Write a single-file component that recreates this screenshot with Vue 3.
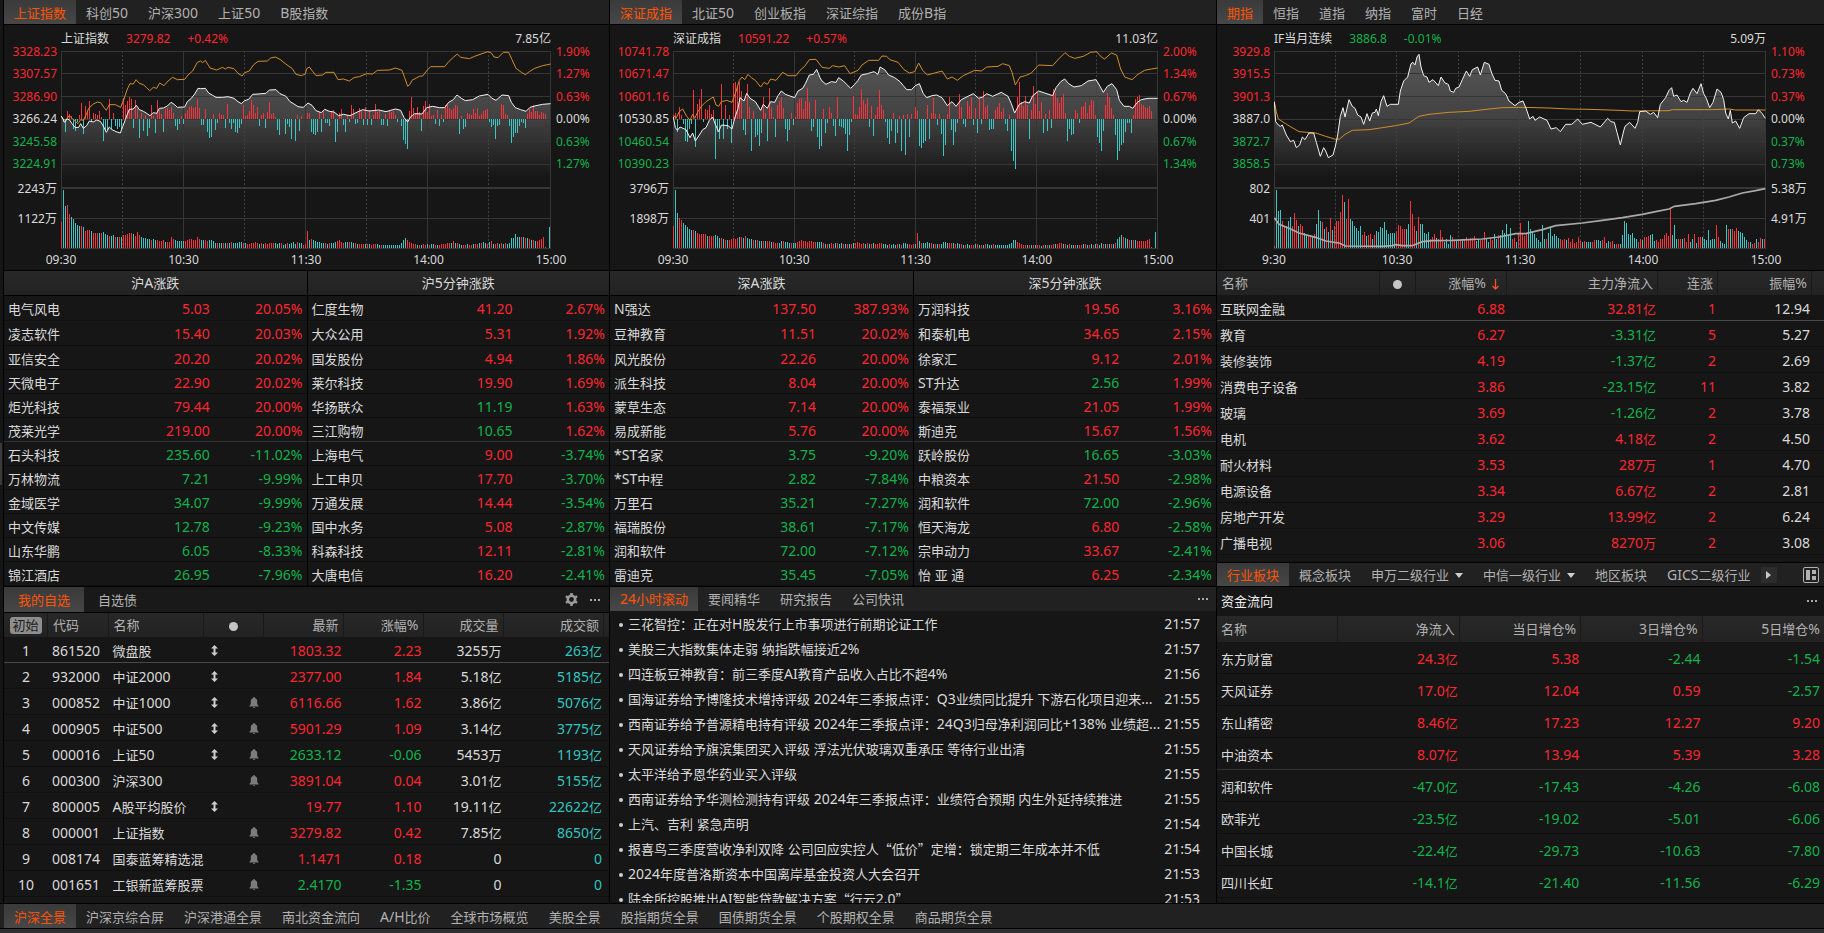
<script setup>
import { h } from 'vue'

/* Latin and digit runs use a slightly larger face than the Chinese text. */
const Txt = (props) =>
  String(props.t)
    .split(/([\x20-\x7e]+)/)
    .filter(Boolean)
    .map((run) => (/^[\x20-\x7e]/.test(run) ? h('span', { class: 'lat' }, run) : run))
Txt.props = ['t']

const bars = (list, base) =>
  [1, -1].map((sign) =>
    list
      .map((v, i) => [v, i])
      .filter(([v]) => v * sign > 0)
      .map(([v, i]) => `M${17 + i * 6} ${base}v${base > 300 ? -Math.abs(v) * 3 : -v * 3}`)
      .join('')
  )

const area = (pts, right) => `M${pts.replace(/ /g, 'L')}L${right} 429L16 429Z`

const charts = [
  {
    id: 'sh',
    tabs: ['上证指数', '科创50', '沪深300', '上证50', 'B股指数'],
    name: '上证指数', price: '3279.82', pct: '+0.42%', tone: 'up', amount: '7.85亿',
    left: ['3328.23', '3307.57', '3286.90', '3266.24', '3245.58', '3224.91'],
    right: ['1.90%', '1.27%', '0.63%', '0.00%', '0.63%', '1.27%'],
    volLeft: ['2243万', '1122万'], volRight: [],
    times: ['09:30', '10:30', '11:30', '14:00', '15:00'],
    width: 1470,
    solid: [16, 382, 748, 1114, 1483], dashed: [199, 565, 931, 1297],
    line: '16,213 26,232 33,222 40,224 48,236 58,248 68,247 74,236 82,250 92,242 100,228 112,231 122,225 133,229 142,243 151,262 160,246 168,254 180,260 193,264 200,245 208,224 214,208 220,193 232,192 241,181 250,194 262,199 272,205 282,212 292,203 302,205 310,190 322,189 334,183 345,172 356,179 364,187 386,186 394,170 406,160 416,147 426,130 434,131 448,130 458,144 470,151 480,157 500,157 516,155 534,160 546,170 556,176 566,167 578,163 590,148 606,147 630,145 640,135 660,134 672,146 690,154 702,170 714,177 726,185 742,187 756,174 768,181 780,197 796,203 806,193 820,199 834,201 848,212 862,208 882,212 900,203 920,194 940,198 968,195 990,200 1018,192 1034,196 1044,218 1055,231 1064,215 1076,206 1098,207 1112,188 1130,184 1150,188 1166,188 1178,172 1192,164 1203,150 1216,160 1228,167 1250,164 1270,153 1296,148 1308,160 1320,166 1338,150 1358,152 1366,172 1378,188 1394,194 1410,199 1422,187 1440,182 1460,178 1484,176',
    avg: '16,218 28,226 40,212 52,224 66,236 74,224 82,226 92,206 98,190 112,177 124,171 134,173 143,186 151,196 160,179 178,179 194,187 204,162 214,132 222,116 232,117 240,104 250,115 262,119 272,128 281,137 292,127 302,130 311,114 324,122 336,108 350,97 364,104 386,103 396,90 410,78 424,52 434,48 440,53 448,46 462,69 482,75 500,67 508,72 516,67 534,71 546,85 558,93 566,83 580,78 592,60 606,49 634,48 644,39 658,36 672,43 684,53 696,62 708,70 720,88 736,92 748,87 752,71 760,66 770,79 780,92 800,90 810,82 834,82 846,104 862,102 880,108 894,98 910,95 932,86 950,87 964,76 1000,75 1018,69 1038,76 1046,98 1055,124 1062,118 1068,106 1090,94 1100,93 1114,75 1124,65 1166,65 1178,50 1192,37 1204,27 1214,37 1240,41 1256,34 1278,26 1296,20 1306,24 1314,36 1326,38 1342,22 1358,22 1368,44 1380,70 1396,82 1408,89 1420,80 1436,70 1460,62 1484,57',
    net: [0, -3, -13, 8, 5, 3, -10, -12, -3, 4, 16, -15, 13, 8, 18, -3, 6, 5, 4, 8, 2, -22, -12, -11, 20, -10, 6, -7, -10, -8, -10, 21, 14, 18, 22, 20, -9, 19, 10, -19, 6, -12, 4, -17, -9, 14, 3, -14, 19, 9, 5, -13, 10, 11, 9, 12, 6, -7, -11, -5, 3, -5, 6, 9, 12, 13, 11, 12, 20, 11, -6, -6, 10, -13, -19, -18, 5, -11, -4, 6, 4, 4, -9, 15, -4, -10, -4, -13, -14, -9, -5, 14, 3, 4, 8, 19, 14, 6, 12, -7, 4, 6, -9, 7, 17, 5, 6, 2, -11, -16, 0, 1, -15, -5, -8, -20, 0, -22, 4, -12, 3, 0, 0, 6, 6, -13, -15, -16, -13, 7, -13, 9, -4, -4, -7, 8, 9, -23, -13, 6, 10, -6, -13, 4, -3, 14, 10, -5, -4, 11, 9, -6, 12, -6, 9, -6, 4, 15, 7, 9, -6, -6, 5, -7, 9, 7, 8, 4, -3, 0, -7, -21, -25, -30, 8, 22, 11, 5, 12, 7, -12, 13, 18, 7, 15, 3, 4, -5, 9, -7, 4, -3, 14, 15, 11, 9, 11, 14, 13, -15, 3, -10, -8, 6, 5, 4, 10, 6, 11, 3, 5, 8, 9, 10, -3, -8, -6, -20, -7, -6, 15, 14, 5, 4, -7, -24, -18, -14, -14, -7, -3, -4, -9, 5, 10, 7, 14, 8, 8, 4, 7, 6, 5],
    vol: [26, -58, -42, 43, 34, -31, -29, -25, -23, -22, 22, -21, 17, 18, 18, -17, 15, 15, 15, -15, 15, -16, -14, -13, 12, -12, -13, 11, -11, 11, -11, 13, 13, 14, 15, 15, -14, 12, 16, 13, -11, -10, -10, -9, -9, 8, -9, -8, 8, 7, 7, 8, -6, 6, 6, 11, 9, -8, -7, -7, -7, -7, 7, 8, 9, 9, 8, 8, 11, 9, -8, -8, 8, 7, -8, -8, -7, -5, 5, -5, -5, 5, -5, 5, -5, 6, -5, -5, -5, -6, -6, 5, -5, 4, 4, 5, 5, 6, 5, -4, 5, -4, 5, 4, 5, 5, 5, -5, -4, -5, 5, -3, -4, 5, -4, -5, -6, -4, 6, -5, -5, 3, 4, 17, -8, 9, -8, -7, -6, -6, -5, -5, 5, -4, 5, -5, -5, -6, 7, 8, 6, 5, -6, -6, 6, -6, -5, 5, -4, 4, 4, 4, -4, 4, -4, 3, 4, 4, -4, -3, 3, -3, -3, -3, -3, -3, -3, -3, -3, -3, -5, -8, -10, 8, 6, 5, 4, 4, -3, 3, -3, 4, 3, -4, 3, -4, -4, 3, -3, 3, 4, 4, 4, 5, 5, -5, 7, -5, 5, -4, -3, 3, 3, -4, 3, 3, -4, 4, 4, -5, 5, -6, -5, 4, -6, 7, -4, 4, 5, -4, 5, -4, 5, -4, -5, -10, -10, -14, -11, -11, 11, -11, 10, -10, 9, -8, 8, -7, 7, 8, 9, 11, 1, 0, -21]
  },
  {
    id: 'sz',
    tabs: ['深证成指', '北证50', '创业板指', '深证综指', '成份B指'],
    name: '深证成指', price: '10591.22', pct: '+0.57%', tone: 'up', amount: '11.03亿',
    left: ['10741.78', '10671.47', '10601.16', '10530.85', '10460.54', '10390.23'],
    right: ['2.00%', '1.34%', '0.67%', '0.00%', '0.67%', '1.34%'],
    volLeft: ['3796万', '1898万'], volRight: [],
    times: ['09:30', '10:30', '11:30', '14:00', '15:00'],
    width: 1455,
    solid: [16, 379, 742, 1105, 1468], dashed: [196, 559, 922, 1285],
    line: '16,216 22,248 28,256 36,246 54,254 66,278 74,264 82,288 94,270 104,254 114,248 124,226 134,216 142,238 152,260 160,240 180,242 192,252 200,220 210,190 216,158 228,168 236,145 246,160 262,170 278,196 286,178 298,190 308,170 320,172 330,152 340,138 352,148 380,158 390,138 404,130 412,116 424,90 436,88 446,73 456,98 462,108 474,118 490,110 504,112 512,98 526,108 536,118 548,130 560,118 570,106 580,90 598,86 618,80 630,88 636,66 650,74 662,90 680,98 696,110 706,122 716,134 730,134 742,122 754,116 766,146 776,158 792,152 806,150 822,158 838,182 852,170 864,184 880,164 900,154 916,146 932,160 944,156 956,146 974,154 1000,142 1020,154 1030,176 1040,204 1054,178 1070,170 1084,174 1094,152 1112,138 1130,144 1154,152 1164,128 1178,110 1190,102 1202,116 1218,126 1240,122 1260,108 1284,104 1296,124 1306,142 1318,124 1332,116 1346,134 1354,166 1368,184 1384,184 1394,190 1408,172 1420,164 1440,160 1469,160',
    avg: '16,210 24,220 34,200 44,192 56,214 66,226 74,208 80,220 90,200 100,184 114,170 136,156 144,180 152,184 160,170 176,166 192,172 204,140 214,106 222,96 230,104 240,88 250,98 262,106 278,126 288,112 298,118 308,102 324,106 344,82 360,92 384,92 396,76 410,64 424,44 444,43 462,67 484,70 494,62 512,66 530,62 546,86 570,76 582,60 602,46 632,46 642,33 656,34 666,44 690,52 708,74 724,84 740,80 752,54 764,76 778,90 800,84 822,78 838,102 852,96 868,106 886,92 920,76 940,78 956,66 990,64 1004,56 1024,62 1032,82 1042,120 1056,96 1072,92 1090,84 1112,60 1154,62 1172,42 1191,23 1204,34 1220,40 1246,34 1268,22 1286,20 1300,36 1310,42 1330,24 1346,30 1358,72 1370,96 1392,104 1410,88 1430,76 1450,72 1469,69',
    net: [3, 6, -13, 12, 4, -5, -22, -23, -10, -5, 29, -28, 15, 20, 30, -3, 10, 9, 14, 5, 9, -40, -13, -20, 35, -20, 14, -10, 4, -24, 36, 37, 33, 37, 28, -11, -16, 35, 12, -32, 8, -18, -16, -27, -14, 22, 6, -22, 31, 12, 2, -18, 14, 18, 22, 11, -10, -22, -11, 6, -6, 2, 16, 20, 21, 10, 18, 31, 17, -12, -8, 19, -18, -30, -27, 10, -14, -4, 12, 6, -7, -17, 22, -7, -8, -9, -15, -32, -16, -3, 23, 5, 4, 12, 30, 19, 15, 21, -8, 13, -17, 4, 12, 29, 14, 9, -3, -19, -25, -12, 6, -24, -14, 3, -32, 4, -36, 5, -18, 5, 0, 12, 8, -27, -29, -24, -22, 14, -20, 6, 21, 5, -6, 5, -15, -37, -26, 5, 22, -11, -26, -13, -4, 25, 12, -5, -8, 18, 13, 22, -6, 11, -14, 20, -5, 28, 12, 14, -11, -10, -10, 9, 12, 16, 7, 11, -5, -12, 4, -32, -42, -50, 22, 37, 17, 13, 23, 14, -20, 9, 33, 15, 27, 8, 17, -14, 5, -12, 9, -9, 30, 26, 21, 16, 22, 25, 6, -22, -10, -16, -15, 9, 6, -4, 12, 13, 17, 6, 14, 19, 18, 4, -18, -24, -32, -12, 14, 26, 22, 11, 4, -16, -41, -32, -26, -24, -13, -4, -4, -14, 4, 20, 22, 24, 15, 14, 12, 11, 13, 8],
    vol: [22, -58, -35, 30, 28, -25, -23, -21, -19, -18, 18, -17, 15, 14, 14, 14, 14, -12, 12, 12, 12, -13, -12, -10, 10, -9, 8, -8, 8, 9, 10, 9, 10, -11, 11, -10, 12, -10, -9, -9, 8, -8, 8, -7, -7, 7, -7, 7, 7, -6, 6, 5, 5, -5, -7, 7, -6, -6, -5, 5, -5, -5, 6, 7, 8, 7, 7, 6, 7, 7, 6, 6, -6, -6, -6, 5, -4, 4, -4, 5, 4, -5, 5, -4, -5, 4, -4, 4, -4, 4, -5, 5, 6, 5, 4, 5, -4, 5, -4, 4, -5, 4, 4, 5, 5, -4, -4, -3, 4, -3, -4, -3, 4, -4, 3, -5, -5, -4, 4, 3, 4, -4, 15, -7, 5, -5, -5, -6, -5, 5, -4, 4, -4, 4, -4, -6, -6, -5, 5, 5, -5, 4, -5, -4, 4, -3, 3, -4, -3, 3, 3, -4, 4, -3, 3, -3, 4, -4, -3, -3, 4, -3, -3, -3, -3, -3, -3, -3, -4, -5, -8, -8, 6, 5, 4, 3, 3, -3, 3, -3, 3, -3, 3, 3, -2, 3, -3, 3, -3, 3, 4, -4, 4, 5, 5, -4, 4, -3, 4, -3, -3, 3, -3, 3, 3, -4, 4, -3, 3, -4, 3, -4, 4, -3, -5, 4, -4, 4, -4, 4, -4, 5, -9, -11, -13, 11, -10, -9, 8, -8, 8, -8, 7, 7, 7, 7, 7, 8, 9, 1, 0, -16]
  },
  {
    id: 'if',
    tabs: ['期指', '恒指', '道指', '纳指', '富时', '日经'],
    name: 'IF当月连续', price: '3886.8', pct: '-0.01%', tone: 'down', amount: '5.09万',
    left: ['3929.8', '3915.5', '3901.3', '3887.0', '3872.7', '3858.5'],
    right: ['1.10%', '0.73%', '0.37%', '0.00%', '0.37%', '0.73%'],
    volLeft: ['802', '401'], volRight: ['5.38万', '4.91万'],
    times: ['9:30', '10:30', '11:30', '14:00', '15:00'],
    width: 1476,
    solid: [16, 1489], dashed: [199, 382, 568, 751, 934, 1120, 1303],
    line: '16,170 20,230 28,240 34,244 40,240 52,270 64,290 74,286 82,308 92,300 100,276 108,284 120,264 134,264 142,292 154,334 164,308 170,318 178,338 192,330 200,300 206,270 214,214 222,188 228,216 240,164 250,184 258,190 266,210 276,216 284,238 294,206 302,228 310,204 318,202 322,192 328,212 336,170 344,152 354,184 364,178 388,178 394,138 404,108 416,96 426,56 432,52 438,60 444,36 450,28 456,66 464,92 474,96 480,112 492,104 508,122 516,96 528,114 538,118 544,138 554,142 560,130 570,126 580,104 592,78 602,94 610,74 626,66 634,90 646,52 660,58 668,84 678,106 690,108 698,136 710,146 720,168 738,182 750,172 762,168 772,192 782,222 792,214 798,226 812,216 834,226 846,252 862,248 874,260 890,238 908,238 926,222 940,238 966,232 994,246 1016,220 1026,230 1036,232 1044,262 1054,300 1064,258 1068,244 1082,232 1098,250 1106,232 1112,200 1130,198 1144,208 1154,202 1166,218 1174,178 1190,158 1200,136 1208,128 1214,154 1224,150 1236,170 1244,166 1254,172 1264,144 1272,130 1284,146 1296,116 1304,146 1312,160 1322,188 1332,172 1344,132 1356,142 1364,164 1370,204 1378,222 1384,196 1390,234 1400,228 1412,250 1424,218 1440,206 1460,206 1468,194 1480,206 1489,220',
    avg: '16,170 22,200 28,222 50,236 66,246 90,260 140,264 170,274 200,283 212,282 228,268 250,256 300,254 340,248 380,242 420,234 450,214 480,208 540,202 600,199 660,192 700,188 760,187 840,189 900,192 960,193 1050,196 1090,198 1200,197 1210,194 1330,194 1380,192 1400,195 1489,195',
    interest: '16,518 30,538 60,550 90,564 140,577 170,588 210,594 230,603 340,604 370,602 380,599 400,602 430,602 460,590 490,587 550,586 640,582 690,576 740,566 770,566 820,554 860,542 940,534 1000,526 1060,518 1120,508 1160,500 1200,492 1216,484 1280,476 1340,466 1380,456 1420,444 1460,437 1489,431',
    net: [],
    vol: [2, -58, -37, -38, 27, 22, -22, -27, -31, 22, 35, 28, -22, 24, 22, -15, -13, 13, 12, -12, 14, -24, -38, -27, 26, -19, 21, -16, 30, -18, 22, 27, 27, 36, 53, -46, 29, 49, -29, -27, -22, -20, -17, -22, 13, 16, -12, 13, 14, -9, 13, -17, -16, -21, -20, -26, -18, -14, -15, -15, -15, 17, 23, 22, 19, 19, -19, -24, 47, 34, 22, -17, 31, -24, -24, -15, -14, -16, 9, 11, 14, -10, 9, 18, 11, -6, -9, -4, -13, 11, 7, -8, 8, 8, -9, 8, 11, 9, 10, 10, 12, -7, -9, 8, 8, 16, -9, -6, 10, 8, -14, -9, 13, -13, -18, -15, -24, -13, -20, 9, 10, -6, 15, 25, 14, 12, 14, -27, -19, -16, -14, -10, -8, -6, -23, -9, 9, -15, -21, -12, -14, -12, -10, 9, 8, 9, -8, 10, 6, 9, 5, 6, 11, 7, -6, 7, -6, -6, -6, 6, 8, -8, -8, -7, 8, 11, -5, -7, 6, 7, -4, 4, 4, -4, -13, -27, -25, -14, -13, -15, -10, -9, 6, 9, -8, 11, 11, 12, -13, -14, -7, 8, 6, 9, 9, 13, 15, 12, 39, -13, -23, -9, 9, 9, -9, 10, 6, 14, -6, -9, 14, -5, 11, 11, -11, -9, -8, -18, -8, -9, -9, 23, 11, -7, -5, -4, -23, 19, -19, 19, 17, 20, -17, -16, -15, -11, -8, 6, -6, 4, 5, -9, 6, 10, -9, 9, -12, 14, -15]
  }
].map((c) => ({ ...c, netBars: bars(c.net, 222), volBars: bars(c.vol, 609), fill: area(c.line, 15 + c.width - 2) }))

const rowLines = [19, 85, 154, 222, 290, 358, 520, 609]
const axisTone = (i) => (i < 3 ? 'up' : i > 3 ? 'down' : 'flat')
const tone = (v) => (String(v).startsWith('-') ? 'down' : 'up')

const rankGroups = [
  [
    { title: '沪A涨跌', rows: [['电气风电', '5.03', '20.05%'], ['凌志软件', '15.40', '20.03%'], ['亚信安全', '20.20', '20.02%'], ['天微电子', '22.90', '20.02%'], ['炬光科技', '79.44', '20.00%'], ['茂莱光学', '219.00', '20.00%'], ['石头科技', '235.60', '-11.02%', 'down'], ['万林物流', '7.21', '-9.99%', 'down'], ['金域医学', '34.07', '-9.99%', 'down'], ['中文传媒', '12.78', '-9.23%', 'down'], ['山东华鹏', '6.05', '-8.33%', 'down'], ['锦江酒店', '26.95', '-7.96%', 'down']] },
    { title: '沪5分钟涨跌', rows: [['仁度生物', '41.20', '2.67%'], ['大众公用', '5.31', '1.92%'], ['国发股份', '4.94', '1.86%'], ['莱尔科技', '19.90', '1.69%'], ['华扬联众', '11.19', '1.63%', 'down'], ['三江购物', '10.65', '1.62%', 'down'], ['上海电气', '9.00', '-3.74%'], ['上工申贝', '17.70', '-3.70%'], ['万通发展', '14.44', '-3.54%'], ['国中水务', '5.08', '-2.87%'], ['科森科技', '12.11', '-2.81%'], ['大唐电信', '16.20', '-2.41%']] }
  ],
  [
    { title: '深A涨跌', rows: [['N强达', '137.50', '387.93%'], ['豆神教育', '11.51', '20.02%'], ['风光股份', '22.26', '20.00%'], ['派生科技', '8.04', '20.00%'], ['蒙草生态', '7.14', '20.00%'], ['易成新能', '5.76', '20.00%'], ['*ST名家', '3.75', '-9.20%', 'down'], ['*ST中程', '2.82', '-7.84%', 'down'], ['万里石', '35.21', '-7.27%', 'down'], ['福瑞股份', '38.61', '-7.17%', 'down'], ['润和软件', '72.00', '-7.12%', 'down'], ['雷迪克', '35.45', '-7.05%', 'down']] },
    { title: '深5分钟涨跌', rows: [['万润科技', '19.56', '3.16%'], ['和泰机电', '34.65', '2.15%'], ['徐家汇', '9.12', '2.01%'], ['ST升达', '2.56', '1.99%', 'down'], ['泰福泵业', '21.05', '1.99%'], ['斯迪克', '15.67', '1.56%'], ['跃岭股份', '16.65', '-3.03%', 'down'], ['中粮资本', '21.50', '-2.98%'], ['润和软件', '72.00', '-2.96%', 'down'], ['恒天海龙', '6.80', '-2.58%'], ['宗申动力', '33.67', '-2.41%'], ['怡 亚 通', '6.25', '-2.34%']] }
  ]
]

const watch = [
  ['861520', '微盘股', 1, 0, '1803.32', '2.23', '3255万', '263亿'],
  ['932000', '中证2000', 1, 0, '2377.00', '1.84', '5.18亿', '5185亿'],
  ['000852', '中证1000', 1, 1, '6116.66', '1.62', '3.86亿', '5076亿'],
  ['000905', '中证500', 1, 1, '5901.29', '1.09', '3.14亿', '3775亿'],
  ['000016', '上证50', 1, 1, '2633.12', '-0.06', '5453万', '1193亿'],
  ['000300', '沪深300', 0, 1, '3891.04', '0.04', '3.01亿', '5155亿'],
  ['800005', 'A股平均股价', 1, 0, '19.77', '1.10', '19.11亿', '22622亿'],
  ['000001', '上证指数', 0, 1, '3279.82', '0.42', '7.85亿', '8650亿'],
  ['008174', '国泰蓝筹精选混', 0, 1, '1.1471', '0.18', '0', '0'],
  ['001651', '工银新蓝筹股票', 0, 1, '2.4170', '-1.35', '0', '0']
]

const newsTabs = ['24小时滚动', '要闻精华', '研究报告', '公司快讯']
const news = [
  ['三花智控：正在对H股发行上市事项进行前期论证工作', '21:57'],
  ['美股三大指数集体走弱 纳指跌幅接近2%', '21:57'],
  ['四连板豆神教育：前三季度AI教育产品收入占比不超4%', '21:56'],
  ['国海证券给予博隆技术增持评级 2024年三季报点评：Q3业绩同比提升 下游石化项目迎来...', '21:55'],
  ['西南证券给予普源精电持有评级 2024年三季报点评：24Q3归母净利润同比+138% 业绩超...', '21:55'],
  ['天风证券给予旗滨集团买入评级 浮法光伏玻璃双重承压 等待行业出清', '21:55'],
  ['太平洋给予恩华药业买入评级', '21:55'],
  ['西南证券给予华测检测持有评级 2024年三季报点评：业绩符合预期 内生外延持续推进', '21:55'],
  ['上汽、吉利 紧急声明', '21:54'],
  ['报喜鸟三季度营收净利双降 公司回应实控人“低价”定增：锁定期三年成本并不低', '21:54'],
  ['2024年度普洛斯资本中国离岸基金投资人大会召开', '21:53'],
  ['陆金所控股推出AI智能贷款解决方案“行云2.0”', '21:53']
]

const sectors = [
  ['互联网金融', '6.88', '32.81亿', '1', '12.94'],
  ['教育', '6.27', '-3.31亿', '5', '5.27'],
  ['装修装饰', '4.19', '-1.37亿', '2', '2.69'],
  ['消费电子设备', '3.86', '-23.15亿', '11', '3.82'],
  ['玻璃', '3.69', '-1.26亿', '2', '3.78'],
  ['电机', '3.62', '4.18亿', '2', '4.50'],
  ['耐火材料', '3.53', '287万', '1', '4.70'],
  ['电源设备', '3.34', '6.67亿', '2', '2.81'],
  ['房地产开发', '3.29', '13.99亿', '2', '6.24'],
  ['广播电视', '3.06', '8270万', '2', '3.08']
]
const sectorTabs = [['行业板块'], ['概念板块'], ['申万二级行业', 1], ['中信一级行业', 1], ['地区板块'], ['GICS二级行业']]

const flows = [
  ['东方财富', '24.3亿', '5.38', '-2.44', '-1.54'],
  ['天风证券', '17.0亿', '12.04', '0.59', '-2.57'],
  ['东山精密', '8.46亿', '17.23', '12.27', '9.20'],
  ['中油资本', '8.07亿', '13.94', '5.39', '3.28'],
  ['润和软件', '-47.0亿', '-17.43', '-4.26', '-6.08'],
  ['欧菲光', '-23.5亿', '-19.02', '-5.01', '-6.06'],
  ['中国长城', '-22.4亿', '-29.73', '-10.63', '-7.80'],
  ['四川长虹', '-14.1亿', '-21.40', '-11.56', '-6.29']
]

const pages = ['沪深全景', '沪深京综合屏', '沪深港通全景', '南北资金流向', 'A/H比价', '全球市场概览', '美股全景', '股指期货全景', '国债期货全景', '个股期权全景', '商品期货全景']
</script>

<template>
  <div class="app">
    <main class="board">
      <div class="gutter"><i class="handle"></i></div>

      <section v-for="(c, ci) in charts" :key="c.id" class="col">
        <div class="quote">
          <nav class="tabs">
            <button v-for="(t, i) in c.tabs" :key="t" type="button" :class="{ on: i === 0 }"><Txt :t="t" /></button>
          </nav>
          <div class="chart" :class="c.id">
            <div class="chart-title">
              <span><Txt :t="c.name" /></span>
              <span :class="c.tone"><Txt :t="c.price" /></span>
              <span :class="c.tone"><Txt :t="c.pct" /></span>
              <span class="amount"><Txt :t="c.amount" /></span>
            </div>
            <div class="axis axis-left">
              <div class="prices"><span v-for="(p, i) in c.left" :key="i" :class="axisTone(i)"><Txt :t="p" /></span></div>
              <div class="vols"><span v-for="p in c.volLeft" :key="p"><Txt :t="p" /></span></div>
            </div>
            <svg class="plot" :viewBox="`15 18 ${c.width} 594`" preserveAspectRatio="none" role="img" :aria-label="c.name">
              <defs>
                <linearGradient :id="'g-' + c.id" gradientUnits="userSpaceOnUse" x1="0" y1="30" x2="0" y2="400">
                  <stop offset="0" stop-color="#fff" stop-opacity="0.28" />
                  <stop offset="0.5" stop-color="#fff" stop-opacity="0.19" />
                  <stop offset="1" stop-color="#fff" stop-opacity="0" />
                </linearGradient>
              </defs>
              <path :d="c.fill" :fill="`url(#g-${c.id})`" />
              <g class="grid">
                <path v-for="y in rowLines" :key="y" :d="`M15 ${y}H${15 + c.width}`" />
                <path class="thick" :d="`M15 429H${15 + c.width}`" />
                <path v-for="x in c.solid" :key="x" :d="`M${x} 18V612`" />
                <path v-for="x in c.dashed" :key="x" class="dash" :d="`M${x} 18V612`" />
              </g>
              <path class="bar red" :d="c.netBars[0]" />
              <path class="bar cyan" :d="c.netBars[1]" />
              <path class="bar red" :d="c.volBars[0]" />
              <path class="bar cyan" :d="c.volBars[1]" />
              <polyline class="line gold" :points="c.avg" />
              <polyline class="line white" :points="c.line" />
              <polyline v-if="c.interest" class="line interest" :points="c.interest" />
            </svg>
            <div class="axis axis-right">
              <div class="prices"><span v-for="(p, i) in c.right" :key="i" :class="axisTone(i)"><Txt :t="p" /></span></div>
              <div class="vols"><span v-for="p in c.volRight" :key="p"><Txt :t="p" /></span></div>
            </div>
            <div class="times"><span v-for="t in c.times" :key="t"><Txt :t="t" /></span></div>
          </div>
        </div>

        <div v-if="ci < 2" class="ranks">
          <table v-for="g in rankGroups[ci]" :key="g.title" class="rank">
            <colgroup><col class="w34" /><col class="w34" /><col /></colgroup>
            <thead><tr><th colspan="3"><Txt :t="g.title" /></th></tr></thead>
            <tbody>
              <tr v-for="r in g.rows" :key="r[0]">
                <td><Txt :t="r[0]" /></td>
                <td class="num" :class="r[3] || 'up'"><Txt :t="r[1]" /></td>
                <td class="num last" :class="tone(r[2])"><Txt :t="r[2]" /></td>
              </tr>
            </tbody>
          </table>
        </div>

        <template v-if="ci === 0">
          <div class="tabbar watch-tabs">
            <nav class="tabs">
              <button type="button" class="on">我的自选</button>
              <button type="button">自选债</button>
            </nav>
            <button type="button" class="icon-btn" aria-label="设置">
              <svg width="13" height="13" viewBox="0 0 13 13" fill="none" stroke="#9c9c9c">
                <circle cx="6.5" cy="6.5" r="3.7" stroke-width="2.6" />
                <path stroke-width="2.6" d="M6.5 0v2M6.5 11v2M.9 3.250l1.700 1M10.400 8.750l1.700 1M12.100 3.250l-1.700 1M2.600 8.750l-1.700 1" />
              </svg>
            </button>
            <button type="button" class="icon-btn dots" aria-label="更多"><i></i><i></i><i></i></button>
          </div>
          <table class="data watch">
            <colgroup><col v-for="n in 9" :key="n" :class="'c' + n" /></colgroup>
            <thead>
              <tr>
                <th class="mid"><button type="button" class="reset">初始</button></th>
                <th>代码</th><th>名称</th><th class="mid"><i class="dot"></i></th>
                <th class="num">最新</th><th class="num"><Txt t="涨幅%" /></th><th class="num">成交量</th><th class="num">成交额</th><th></th>
              </tr>
            </thead>
            <tbody>
              <tr v-for="(r, i) in watch" :key="r[0]">
                <td class="mid"><Txt :t="i + 1" /></td>
                <td><Txt :t="r[0]" /></td>
                <td class="name"><Txt :t="r[1]" /></td>
                <td>
                  <div class="marks">
                    <svg v-if="r[2]" class="updown" width="7" height="11" viewBox="0 0 7 11"><path fill="#cdcdcd" d="M3.500 0L7 3.500H4.500v4H7L3.500 11 0 7.500h2.500v-4H0z" /></svg>
                    <svg v-if="r[3]" class="bell" width="10" height="11" viewBox="0 0 10 11"><path fill="#7c7c7c" d="M5 0c.6 0 .9.400.9.900C7.400 1.300 8.200 2.500 8.200 4v3L9.600 9v.5H.4V9l1.400-2V4c0-1.500.8-2.700 2.300-3.100C4.100.4 4.400 0 5 0zM3.800 10h2.400c-.2.700-.6 1-1.200 1s-1-.3-1.200-1z" /></svg>
                  </div>
                </td>
                <td class="num" :class="tone(r[5])"><Txt :t="r[4]" /></td>
                <td class="num" :class="tone(r[5])"><Txt :t="r[5]" /></td>
                <td class="num"><Txt :t="r[6]" /></td>
                <td class="num teal"><Txt :t="r[7]" /></td>
                <td></td>
              </tr>
            </tbody>
          </table>
        </template>

        <template v-else-if="ci === 1">
          <div class="tabbar">
            <nav class="tabs">
              <button v-for="(t, i) in newsTabs" :key="t" type="button" :class="{ on: i === 0 }"><Txt :t="t" /></button>
            </nav>
            <button type="button" class="icon-btn dots news-more" aria-label="更多"><i></i><i></i><i></i></button>
          </div>
          <ul class="news">
            <li v-for="n in news" :key="n[0]">
              <a href="#"><Txt :t="n[0]" /></a>
              <time><Txt :t="n[1]" /></time>
            </li>
          </ul>
        </template>

        <template v-else>
          <table class="data sector">
            <colgroup><col v-for="n in 7" :key="n" :class="'c' + n" /></colgroup>
            <thead>
              <tr>
                <th>名称</th><th class="mid"><i class="dot"></i></th>
                <th class="num sorted"><Txt t="涨幅%" /><svg width="7" height="11" viewBox="0 0 7 11"><path d="M3.500 0v10M.5 7l3 3 3-3" fill="none" stroke="#f4502c" stroke-width="1.300" /></svg></th>
                <th class="num">主力净流入</th><th class="num">连涨</th><th class="num"><Txt t="振幅%" /></th><th></th>
              </tr>
            </thead>
            <tbody>
              <tr v-for="r in sectors" :key="r[0]">
                <td><Txt :t="r[0]" /></td><td></td>
                <td class="num up"><Txt :t="r[1]" /></td>
                <td class="num" :class="tone(r[2])"><Txt :t="r[2]" /></td>
                <td class="num up"><Txt :t="r[3]" /></td>
                <td class="num"><Txt :t="r[4]" /></td><td></td>
              </tr>
            </tbody>
          </table>
          <div class="tabbar sector-tabs">
            <nav class="tabs">
              <button v-for="(t, i) in sectorTabs" :key="t[0]" type="button" :class="{ on: i === 0 }"><Txt :t="t[0]" /><i v-if="t[1]" class="caret"></i></button>
            </nav>
            <button type="button" class="next" aria-label="下一页"><i></i></button>
            <button type="button" class="icon-btn layout" aria-label="布局">
              <svg width="16" height="16" viewBox="0 0 16 16"><rect x=".5" y=".5" width="15" height="15" rx="1.500" fill="none" stroke="#b0b0b0" /><path fill="#b0b0b0" d="M3 3h4v10H3zM9 3h4v4H9zM9 9h4v4H9z" /></svg>
            </button>
          </div>
          <div class="flow-title">
            <h2>资金流向</h2>
            <button type="button" class="icon-btn dots" aria-label="更多"><i></i><i></i><i></i></button>
          </div>
          <table class="data flow">
            <thead>
              <tr><th>名称</th><th class="num">净流入</th><th class="num">当日增仓<Txt t="%" /></th><th class="num"><Txt t="3日增仓%" /></th><th class="num"><Txt t="5日增仓%" /></th></tr>
            </thead>
            <tbody>
              <tr v-for="r in flows" :key="r[0]">
                <td><Txt :t="r[0]" /></td>
                <td v-for="n in 4" :key="n" class="num" :class="tone(r[n])"><Txt :t="r[n]" /></td>
              </tr>
            </tbody>
          </table>
        </template>
      </section>
    </main>

    <footer>
      <nav class="tabs">
        <button v-for="(p, i) in pages" :key="p" type="button" :class="{ on: i === 0 }"><Txt :t="p" /></button>
      </nav>
    </footer>
  </div>
</template>

<style>
body {
  background: #161616;
}
.lat {
  font-family: "Noto Sans", "Open Sans", sans-serif;
  font-size: 14px;
  white-space: pre;
}
</style>

<style scoped>
.app {
  height: 100vh;
  display: flex;
  flex-direction: column;
  color: #dadada;
  background: #161616;
  font: 13px/20px "Noto Sans CJK SC", "Noto Sans", sans-serif;
  overflow: hidden;
}
.app * {
  box-sizing: border-box;
}
button {
  font: inherit;
  color: inherit;
  background: none;
  border: 0;
  margin: 0;
  padding: 0;
}
.up { color: #fb2630; }
.down { color: #12b24a; }
.flat { color: #dadada; }
.teal { color: #32c5bf; }

.board {
  flex: 1;
  min-height: 0;
  display: grid;
  grid-template-columns: 3px 606fr 607fr 608fr;
  grid-template-rows: minmax(0, 1fr);
}
.gutter {
  display: flex;
  align-items: center;
  padding-top: 25px;
}
.handle {
  width: 2px;
  height: 42px;
  background: #3a3a3a;
}
.col {
  display: flex;
  flex-direction: column;
  min-width: 0;
  overflow: hidden;
  border-left: 1px solid #000;
}

.tabs {
  display: flex;
  height: 24px;
  background: #212121;
  color: #b2b2b2;
  min-width: 0;
  overflow: hidden;
}
.tabs button {
  padding: 0 10px;
  white-space: nowrap;
  line-height: 24px;
  flex: none;
}
.tabs .on {
  color: #ff5405;
  background: linear-gradient(#3a3a3a, #474747);
}
.quote {
  border-bottom: 1px solid #000;
}
.quote > .tabs {
  height: 25px;
  border-bottom: 1px solid #000;
}
.quote > .tabs button,
footer .tabs button {
  line-height: 26px;
}

.chart {
  display: grid;
  grid-template: 26px 198px 21px / 57px minmax(0, 1fr) 58px;
  font-size: 12px;
}
.chart.sz {
  grid-template-columns: 63px minmax(0, 1fr) 58px;
}
.chart :deep(.lat) {
  font-size: 12px;
}
.chart-title {
  grid-area: 1 / 2;
  display: flex;
  gap: 17px;
  line-height: 25px;
  white-space: nowrap;
}
.amount {
  margin-left: auto;
}
.axis {
  grid-row: 2;
  line-height: 16px;
}
.axis-left {
  grid-column: 1;
  text-align: right;
  padding-right: 4px;
}
.axis-right {
  grid-column: 3;
  padding-left: 5px;
}
.prices,
.vols {
  display: flex;
  flex-direction: column;
  justify-content: space-between;
}
.prices {
  height: 129px;
  margin-top: -8px;
}
.vols {
  height: 47px;
  margin-top: 8px;
}
.plot {
  grid-area: 2 / 2;
  width: 100%;
  height: 100%;
  display: block;
}
.times {
  grid-area: 3 / 2;
  display: flex;
  justify-content: space-between;
  margin: 0 -16px;
  line-height: 19px;
}
.times span {
  width: 32px;
  text-align: center;
}
.grid path {
  stroke: #363636;
  stroke-width: 3;
  shape-rendering: crispEdges;
}
.grid .thick {
  stroke-width: 6;
}
.grid .dash {
  stroke: #414141;
  stroke-dasharray: 6 6;
}
.bar {
  stroke-width: 3;
  fill: none;
  shape-rendering: crispEdges;
}
.red { stroke: #fb333c; }
.cyan { stroke: #3dc6c4; }
.line {
  fill: none;
  stroke-width: 3;
}
.gold { stroke: #d28d2b; }
.white { stroke: #f2f2f2; }
.interest {
  stroke: #aaa;
  stroke-width: 5;
}

table {
  width: 100%;
  table-layout: fixed;
  border-spacing: 0;
  white-space: nowrap;
}
th,
td {
  padding: 0;
  text-align: left;
  font-weight: 400;
  overflow: hidden;
}
td {
  border-bottom: 1px solid #0f0f0f;
}
thead tr {
  background: linear-gradient(#282828, #222);
}
.num { text-align: right; }
.mid { text-align: center; }

.ranks {
  display: grid;
  grid-template-columns: 1fr 1fr;
  border-bottom: 1px solid #000;
}
.rank + .rank {
  border-left: 1px solid #000;
}
.w34 { width: 34%; }
.rank th {
  height: 25px;
  text-align: center;
  border-bottom: 1px solid #000;
}
.rank td {
  height: 24px;
  padding-top: 2px;
}
.rank tr:nth-child(-n + 2) td {
  height: 25px;
}
.rank tr:nth-child(6) td {
  border-color: #303030;
}
.rank td:first-child { padding-left: 4px; }
.rank .last { padding-right: 4px; }

.tabbar {
  flex: none;
  display: flex;
  align-items: center;
  background: #212121;
}
.icon-btn {
  display: flex;
  align-items: center;
  flex: none;
}
.dots {
  gap: 2px;
}
.dots i {
  width: 2px;
  height: 2px;
  background: #a8a8a8;
}
.watch-tabs {
  height: 26px;
  background: #191919;
  border-bottom: 1px solid #000;
}
.watch-tabs .tabs {
  height: 25px;
  margin-right: auto;
  background: none;
}
.watch-tabs .tabs button {
  padding: 0 14px;
  line-height: 25px;
}
.watch-tabs .dots {
  margin: 0 9px 0 12px;
}
.news-more {
  margin: 0 8px 0 auto;
}

.data th {
  height: 24px;
  color: #b2b2b2;
  padding: 0 4px 0 5px;
  border-right: 1px solid #191919;
}
.data td {
  height: 26px;
  padding: 2px 2px 0 4px;
}
.data .mid { padding-left: 0; padding-right: 0; }
.dot {
  display: inline-block;
  width: 9px;
  height: 9px;
  border-radius: 50%;
  background: #c4c4c4;
  vertical-align: middle;
}
.watch tr:first-child td,
.sector tr:first-child td {
  border-color: #484848;
}
.watch .c1 { width: 44px; }
.watch .c2 { width: 10%; }
.watch .c3 { width: 95px; }
.watch .c4 { width: 60px; }
.watch .c5,
.watch .c6,
.watch .c7 { width: 80px; }
.watch .c8 { width: auto; }
.watch .c9 { width: 5px; }
.watch .name { padding-right: 0; }
.data th:last-child:empty { padding: 0; border: 0; }
.data td:last-child:empty { padding: 0; }
.reset {
  display: block;
  width: 32px;
  height: 17px;
  margin: 0 auto;
  line-height: 16px;
  border-radius: 3px;
  background: #8e8e8e;
  color: #1c1c1c;
}
.marks {
  display: flex;
  align-items: center;
  padding: 0 3px;
}
.bell { margin-left: auto; }

.news {
  flex: 1;
  min-height: 0;
  overflow: hidden;
  list-style: none;
  margin: 0;
  padding: 0 16px 0 18px;
}
.news li {
  display: flex;
  gap: 2px;
  line-height: 25px;
}
.news li::before {
  content: "";
  flex: none;
  width: 4px;
  height: 4px;
  margin: 12px 3px 0 -9px;
  border-radius: 50%;
  background: #cfcfcf;
}
.news a {
  flex: 1;
  color: inherit;
  text-decoration: none;
  white-space: nowrap;
  overflow: hidden;
}

.sector td:first-child { padding-left: 3px; }
.sector .c1 { width: auto; }
.sector .c2 { width: 36px; }
.sector .c3 { width: 91px; }
.sector .c4 { width: 151px; }
.sector .c5 { width: 60px; }
.sector .c6 { width: 94px; }
.sector .c7 { width: 12px; }
.sorted svg {
  margin: 0 3px 0 6px;
  vertical-align: middle;
}
.sector-tabs {
  margin-top: 7px;
  height: 25px;
  border-top: 1px solid #000;
  border-bottom: 1px solid #000;
}
.sector-tabs .tabs {
  height: 23px;
}
.caret {
  display: inline-block;
  margin: 0 0 2px 6px;
  border: 4px solid transparent;
  border-top: 5px solid #d0d0d0;
  border-bottom: 0;
  vertical-align: middle;
}
.next {
  display: flex;
  align-items: center;
  justify-content: center;
  width: 16px;
  height: 16px;
  background: #2c2c2c;
}
.next i {
  border: 4px solid transparent;
  border-left: 5px solid #c8c8c8;
  border-right: 0;
}
.layout {
  margin: 0 5px 0 auto;
}
.flow-title {
  display: flex;
  align-items: center;
  justify-content: space-between;
  height: 29px;
  padding: 0 7px 2px 4px;
}
.flow-title h2 {
  margin: 0;
  font-size: 13px;
  font-weight: 400;
  color: #f0f0f0;
}
.flow th {
  height: 26px;
  padding-left: 4px;
}
.flow td {
  height: 32px;
}
.flow th:last-child {
  padding-right: 4px;
  border-right: 0;
}
.flow td:last-child {
  padding-right: 4px;
}
.flow tr:nth-child(4) td {
  border-color: #303030;
}

footer {
  flex: none;
  border-top: 1px solid #000;
  border-bottom: 4px solid #2f2f32;
}
footer .tabs {
  height: 25px;
  padding-left: 4px;
  border-bottom: 1px solid #000;
}
</style>
